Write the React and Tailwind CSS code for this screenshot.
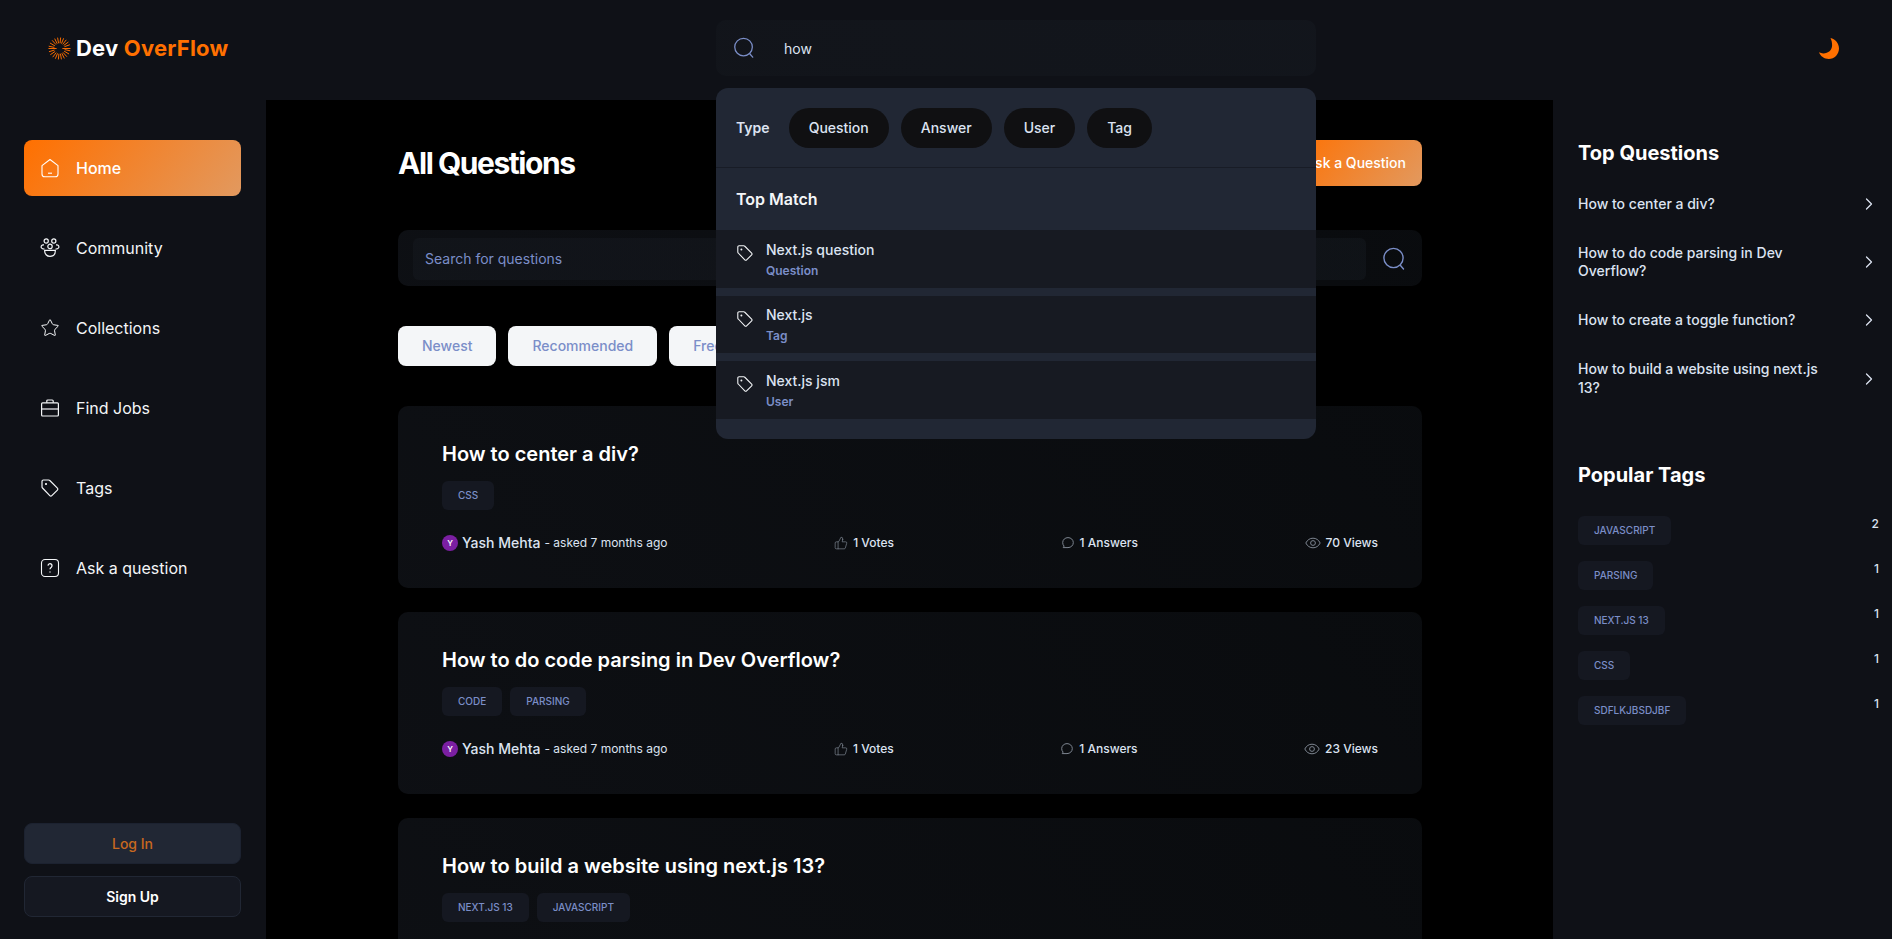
import React from 'react'
import { Star, ChevronRight, ThumbsUp } from 'lucide-react'

const FONT = 'font-["Inter",sans-serif]'

function SearchIcon({ className }) {
  return (
    <svg viewBox="0 0 24 24" fill="none" stroke="currentColor" strokeWidth="1.4" strokeLinecap="round" className={className}>
      <circle cx="11.5" cy="11" r="9.6" />
      <path d="M18.5 18.5 21.5 22" />
    </svg>
  )
}

function HomeIcon() {
  return (
    <svg viewBox="0 0 20 20" fill="none" stroke="currentColor" strokeWidth="1.1" className="w-5 h-5 shrink-0">
      <path d="M2 7.6 10 1.5l8 6.1v8.4a2.8 2.8 0 0 1-2.8 2.8H4.8A2.8 2.8 0 0 1 2 16V7.6Z" strokeLinejoin="round" />
      <path d="M8 15.2h4" />
    </svg>
  )
}

function CommunityIcon() {
  return (
    <svg viewBox="0 0 20 20" fill="none" stroke="currentColor" strokeWidth="1.2" className="w-5 h-5 shrink-0">
      <circle cx="6.2" cy="3" r="2.1" />
      <circle cx="13.8" cy="3" r="2.1" />
      <circle cx="10" cy="8.4" r="2.2" />
      <path d="M4 6.8H3a2 2 0 0 0-1.5 3.2c.5.7 1.6 1 3 1.1M16 6.8h1a2 2 0 0 1 1.5 3.2c-.5.7-1.6 1-3 1.1" />
      <path d="M4.6 12.4h10.8c0 3.6-2.2 6-5.4 6s-5.4-2.4-5.4-6Z" strokeLinejoin="round" />
    </svg>
  )
}

function JobsIcon() {
  return (
    <svg viewBox="0 0 20 20" fill="none" stroke="currentColor" strokeWidth="1.2" className="w-5 h-5 shrink-0">
      <rect x="1.6" y="4.8" width="16.8" height="13.2" rx="1" />
      <path d="M1.6 11h16.8" />
      <path d="M6.800 4.800V3a1 1 0 0 1 1-1h4.400a1 1 0 0 1 1 1v1.800" />
    </svg>
  )
}

function QuestionIcon() {
  return (
    <svg viewBox="0 0 20 20" fill="none" stroke="currentColor" strokeWidth="1.1" className="w-5 h-5 shrink-0">
      <rect x="1.5" y="1.5" width="17" height="17" rx="3.5" />
      <path d="M8 7.6a2 2 0 1 1 3.3 1.6c-.8.6-1.3 1-1.3 2" strokeWidth="1.3" />
      <path d="M10 13.4v1" strokeWidth="1.4" />
    </svg>
  )
}

function TagIcon({ className }) {
  return (
    <svg viewBox="0 0 20 20" fill="none" stroke="currentColor" strokeWidth="1.2" strokeLinejoin="round" className={className}>
      <path d="M2 3.4A1.4 1.4 0 0 1 3.4 2h5.2c.5 0 .9.2 1.2.5l7.6 7.6a1.4 1.4 0 0 1 0 2l-5.6 5.6a1.4 1.4 0 0 1-2 0L2.500 10c-.3-.3-.5-.7-.5-1.200V3.400Z" />
      <circle cx="6" cy="6" r="0.5" fill="currentColor" />
    </svg>
  )
}

function ChatIcon() {
  return (
    <svg viewBox="0 0 14 14" fill="none" stroke="currentColor" strokeWidth="1" className="w-3.5 h-3.5 shrink-0">
      <path d="M7 1.6c3 0 5.3 2.2 5.3 5s-2.3 5-5.3 5H2.2l.9-1.5A5 5 0 0 1 1.7 6.6c0-2.8 2.3-5 5.3-5Z" strokeLinejoin="round" />
    </svg>
  )
}

function EyeIcon() {
  return (
    <svg viewBox="0 0 16 16" fill="none" stroke="currentColor" strokeWidth="1" className="w-4 h-4 shrink-0">
      <path d="M.8 8C2.4 4.800 5 3.200 8 3.200s5.600 1.600 7.200 4.800c-1.600 3.200-4.200 4.800-7.200 4.800S2.400 11.200.8 8Z" strokeLinejoin="round" />
      <circle cx="8" cy="8" r="2.4" />
    </svg>
  )
}

function Moon() {
  return (
    <svg viewBox="0 0 20 21" className="w-5 h-[21px]" fill="#ff7000">
      <path d="M11.5 0C15.9 1.100 20 5 20 10.500 20 16.300 15.500 21 9.800 21 5.300 21 1.500 18.300 0 14.300c1.300.7 2.800 1.100 4.300 1.100 5 0 8.800-3.400 8.800-8.200 0-2.700-.6-5.100-1.600-7.200Z" />
    </svg>
  )
}

function Logo() {
  const rays = [-168, -150, -132, -116, -100, -84, -68, -52, -36, -20, 0, 12, 30, 48, 64, 80, 96, 112, 128, 146, 180, 163]
  return (
    <svg viewBox="0 0 24 24" className="w-[23px] h-[23px] shrink-0" stroke="#ff7000" strokeWidth="1" fill="none">
      {rays.map((a) => {
        const r = (a * Math.PI) / 180
        const inner = a === 0 || a === 180 ? 3 : 5.5
        return (
          <line
            key={a}
            x1={12 + Math.cos(r) * inner}
            y1={12 + Math.sin(r) * inner}
            x2={12 + Math.cos(r) * 11.5}
            y2={12 + Math.sin(r) * 11.5}
          />
        )
      })}
    </svg>
  )
}

const navItems = [
  { label: 'Home', icon: <HomeIcon />, active: true },
  { label: 'Community', icon: <CommunityIcon /> },
  { label: 'Collections', icon: <Star className="w-5 h-5 shrink-0" strokeWidth={1.2} /> },
  { label: 'Find Jobs', icon: <JobsIcon /> },
  { label: 'Tags', icon: <TagIcon className="w-5 h-5 shrink-0" /> },
  { label: 'Ask a question', icon: <QuestionIcon /> },
]

const questions = [
  { title: 'How to center a div?', tags: ['CSS'], votes: 1, answers: 1, views: 70 },
  { title: 'How to do code parsing in Dev Overflow?', tags: ['CODE', 'PARSING'], votes: 1, answers: 1, views: 23 },
  { title: 'How to build a website using next.js 13?', tags: ['NEXT.JS 13', 'JAVASCRIPT'] },
]

const topQuestions = [
  'How to center a div?',
  'How to do code parsing in Dev Overflow?',
  'How to create a toggle function?',
  'How to build a website using next.js 13?',
]

const popularTags = [
  ['JAVASCRIPT', 2],
  ['PARSING', 1],
  ['NEXT.JS 13', 1],
  ['CSS', 1],
  ['SDFLKJBSDJBF', 1],
]

const matches = [
  ['Next.js question', 'Question', 'h-[58px]'],
  ['Next.js', 'Tag', 'h-[57px]'],
  ['Next.js jsm', 'User', 'h-[58px]'],
]

function TagChip({ name }) {
  return (
    <span className="h-[29px] flex items-center px-4 rounded-md bg-[#151821] text-[#7b8ec8] text-[10px] font-medium uppercase">
      {name}
    </span>
  )
}

function QuestionCard({ q }) {
  return (
    <div className="bg-[linear-gradient(232deg,rgba(23,28,35,0.41)_0%,rgba(19,22,28,0.7)_100%)] rounded-[10px] px-11 pt-[31px] h-[182px] shrink-0">
      <h3 className="text-xl leading-[34px] font-semibold text-white">{q.title}</h3>
      <div className="flex gap-2 mt-[10px]">
        {q.tags.map((t) => (
          <TagChip key={t} name={t} />
        ))}
      </div>
      {q.views && (
        <div className="flex justify-between items-center mt-[25px] h-[16px] text-[#dce3f1]">
          <div className="flex items-center">
            <span className="w-4 h-4 rounded-full bg-[#7b1fa2] text-white text-[8px] font-semibold flex items-center justify-center">Y</span>
            <span className="ml-1 text-sm font-medium">Yash Mehta</span>
            <span className="ml-1 text-xs">- asked 7 months ago</span>
          </div>
          <div className="flex items-center gap-[5px] text-xs font-medium">
            <ThumbsUp className="w-[14px] h-[14px] text-[#7d8590]" strokeWidth={1.2} />
            <span>{q.votes} Votes</span>
          </div>
          <div className="flex items-center gap-[5px] text-xs font-medium">
            <span className="text-[#7d8590]"><ChatIcon /></span>
            <span>{q.answers} Answers</span>
          </div>
          <div className="flex items-center gap-[5px] text-xs font-medium">
            <span className="text-[#7d8590]"><EyeIcon /></span>
            <span>{q.views} Views</span>
          </div>
        </div>
      )}
    </div>
  )
}

function App() {
  return (
    <div className={`h-screen overflow-hidden flex flex-col bg-black text-white ${FONT}`}>
      {/* Navbar */}
      <header className="h-[100px] shrink-0 bg-[#0f1117] flex items-center pl-12 pr-12 pb-1">
        <div className="w-[668px] shrink-0 flex items-center gap-[5px]">
          <Logo />
          <span className="text-[22px] leading-8 font-bold tracking-[0.2px] text-white">
            Dev <span className="text-[#ff7000]">OverFlow</span>
          </span>
        </div>

        <div className="relative w-[600px] shrink-0">
          <div className="h-14 rounded-[10px] bg-[linear-gradient(232deg,rgba(23,28,35,0.41)_0%,rgba(19,22,28,0.7)_100%)] flex items-center pl-[17px] pr-4">
            <SearchIcon className="w-[22px] h-[24px] text-[#7b8ec8] shrink-0" />
            <span className="ml-[29px] mt-[2px] text-sm text-[#dce3f1]">how</span>
          </div>

          {/* Search results dropdown */}
          <div className="absolute z-10 top-[68px] left-0 w-full h-[351px] bg-[#212734] rounded-xl">
            <div className="h-20 flex items-center gap-[19px] px-5 border-b border-[#181c26]">
              <span className="text-sm font-semibold text-[#dce3f1]">Type</span>
              <div className="flex gap-3">
                {['Question', 'Answer', 'User', 'Tag'].map((t) => (
                  <span key={t} className="h-10 px-5 flex items-center rounded-[20px] bg-[#101012] text-sm font-medium text-[#dce3f1]">
                    {t}
                  </span>
                ))}
              </div>
            </div>
            <div className="h-[62px] flex items-center px-5 text-base font-semibold text-[#f4f6f8]">Top Match</div>
            <div className="flex flex-col gap-2">
              {matches.map(([name, kind, height]) => (
                <div key={name} className={`${height} bg-[#171a22] flex items-center gap-3 px-5`}>
                  <TagIcon className="w-[18px] h-[18px] text-[#f4f6f8] shrink-0 -mt-3" />
                  <div>
                    <div className="text-sm leading-5 font-medium text-[#dce3f1]">{name}</div>
                    <div className="text-xs leading-4 mt-[3px] font-semibold text-[#7b8ec8]">{kind}</div>
                  </div>
                </div>
              ))}
            </div>
          </div>
        </div>

        <div className="ml-auto mr-[5px]">
          <Moon />
        </div>
      </header>

      <div className="flex-1 flex min-h-0">
        {/* Left sidebar */}
        <aside className="w-[266px] shrink-0 bg-[#0f1117] flex flex-col justify-between pl-6 pr-[25px] pt-10 pb-[22px]">
          <nav className="flex flex-col gap-6">
            {navItems.map((item) => (
              <div
                key={item.label}
                className={`h-14 flex items-center gap-4 pl-4 rounded-lg text-base ${
                  item.active ? 'bg-[linear-gradient(129deg,#ff7000_0%,#e2995f_100%)] font-medium' : 'text-[#f4f6f8]'
                }`}
              >
                {item.icon}
                <span>{item.label}</span>
              </div>
            ))}
          </nav>
          <div className="flex flex-col gap-3">
            <button className="h-[41px] rounded-lg bg-[#212734] border border-[#1c2230] text-sm font-medium text-[#c9691f]">Log In</button>
            <button className="h-[41px] rounded-lg bg-[#151821] border border-[#212734] text-sm font-semibold text-white">Sign Up</button>
          </div>
        </aside>

        {/* Main */}
        <main className="flex-1 min-w-0 bg-black pl-[132px] pr-[131px] pt-10">
          <div className="flex items-center justify-between h-[46px]">
            <h1 className="text-[30px] font-bold tracking-[-1.45px] text-white">All Questions</h1>
            <button className="h-[46px] px-4 rounded-lg bg-[linear-gradient(129deg,#ff7000_0%,#e2995f_100%)] text-sm font-medium text-white">
              Ask a Question
            </button>
          </div>

          <div className="mt-11 h-14 rounded-[10px] bg-[linear-gradient(232deg,rgba(23,28,35,0.41)_0%,rgba(19,22,28,0.7)_100%)] flex items-center pl-[15px] pr-4 pt-[2px]">
            <div className="flex-1 h-[42px] rounded-md bg-[linear-gradient(232deg,rgba(23,28,35,0.41)_0%,rgba(19,22,28,0.7)_100%)] flex items-center pl-3 text-sm text-[#7b8ec8]">Search for questions</div>
            <SearchIcon className="ml-4 w-[24px] h-[24px] text-[#7b8ec8] shrink-0" />
          </div>

          <div className="mt-10 flex gap-3">
            {['Newest', 'Recommended', 'Frequent', 'Unanswered'].map((f) => (
              <span key={f} className="h-10 px-6 flex items-center rounded-lg bg-[#f4f6f8] text-sm font-medium text-[#7b8ec8]">
                {f}
              </span>
            ))}
          </div>

          <div className="mt-10 flex flex-col gap-6">
            {questions.map((q) => (
              <QuestionCard key={q.title} q={q} />
            ))}
          </div>
        </main>

        {/* Right sidebar */}
        <aside className="w-[339px] shrink-0 bg-[#0f1117] pl-[25px] pr-[13px] pt-[39px]">
          <h2 className="text-xl leading-7 font-bold text-white">Top Questions</h2>
          <div className="mt-[27px] flex flex-col gap-[30px]">
            {topQuestions.map((t) => (
              <div key={t} className="flex items-center justify-between">
                <p className="w-[256px] text-sm leading-[18.2px] font-medium text-[#dce3f1]">{t}</p>
                <ChevronRight className="w-5 h-5 text-[#dce3f1]" strokeWidth={1.5} />
              </div>
            ))}
          </div>

          <h2 className="mt-16 text-xl leading-7 font-bold text-white">Popular Tags</h2>
          <div className="mt-[27px] flex flex-col gap-4">
            {popularTags.map(([name, count]) => (
              <div key={name} className="flex items-start justify-between">
                <TagChip name={name} />
                <span className="text-xs font-medium text-[#dce3f1]">{count}</span>
              </div>
            ))}
          </div>
        </aside>
      </div>
    </div>
  )
}

export default App
